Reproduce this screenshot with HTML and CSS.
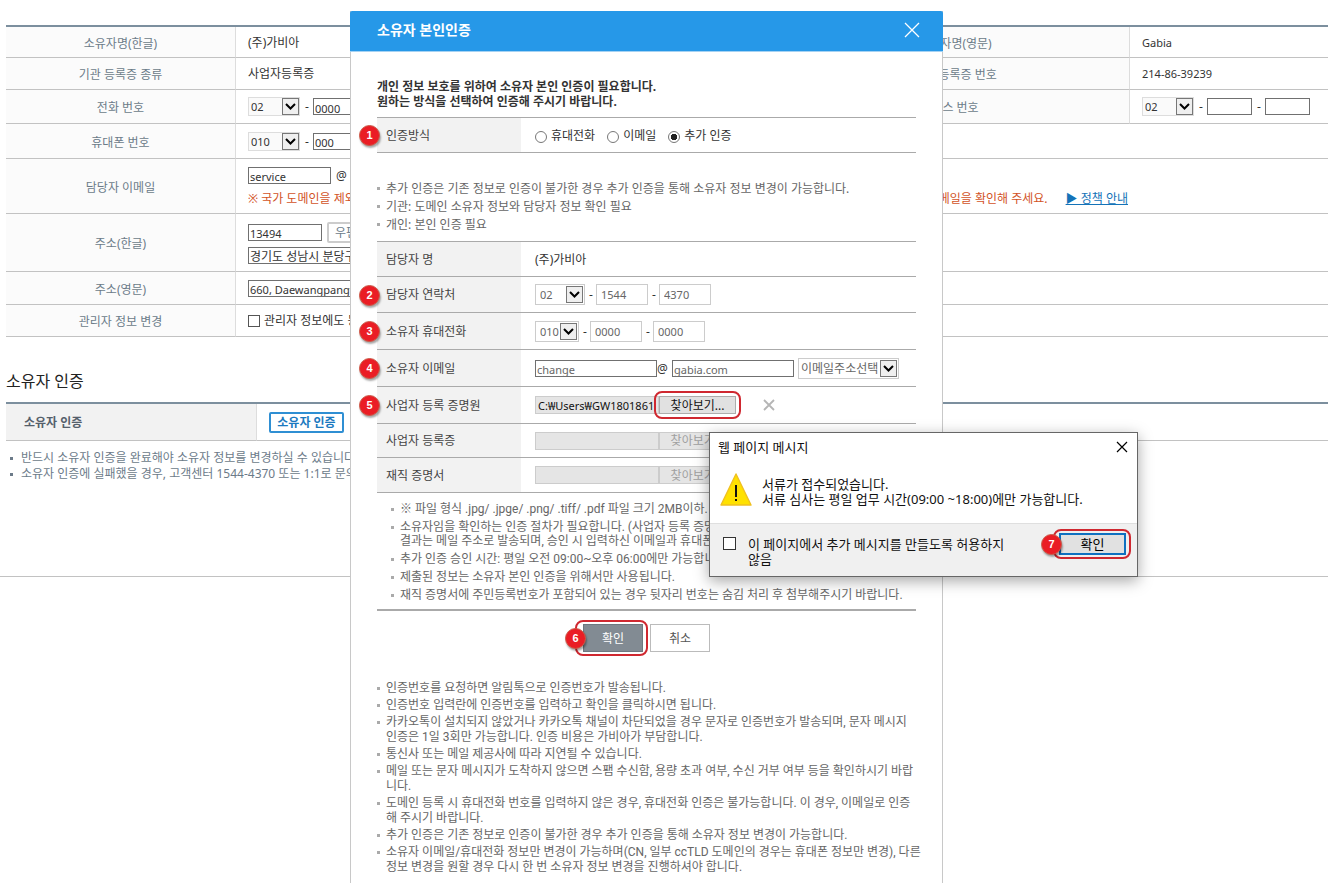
FILE: index.html
```html
<!DOCTYPE html>
<html lang="ko">
<head>
  <meta charset="UTF-8">
  <title>소유자 정보 변경</title>
  <link rel="stylesheet" href="styles.css">
</head>
<body>

  <!-- 소유자 정보 -->
  <div class="page">
    <table class="info">
      <colgroup>
        <col class="col-label">
        <col>
        <col class="col-label2">
        <col class="col-last">
      </colgroup>
      <tr class="h31">
        <th>소유자명(한글)</th>
        <td>(주)가비아</td>
        <th>소유자명(영문)</th>
        <td class="latin">Gabia</td>
      </tr>
      <tr class="h32">
        <th>기관 등록증 종류</th>
        <td>사업자등록증</td>
        <th>기관 등록증 번호</th>
        <td class="latin">214-86-39239</td>
      </tr>
      <tr class="h34">
        <th>전화 번호</th>
        <td>
          <div class="line">
            <select class="sel" aria-label="지역 번호"><option>02</option></select>
            <span class="dash">-</span>
            <input class="inp w45" type="text" value="0000" aria-label="전화 번호 앞자리">
          </div>
        </td>
        <th>팩스 번호</th>
        <td>
          <div class="line">
            <select class="sel" aria-label="팩스 지역 번호"><option>02</option></select>
            <span class="dash">-</span>
            <input class="inp w45" type="text" aria-label="팩스 번호 앞자리">
            <span class="dash">-</span>
            <input class="inp w45" type="text" aria-label="팩스 번호 뒷자리">
          </div>
        </td>
      </tr>
      <tr class="h35">
        <th>휴대폰 번호</th>
        <td colspan="3">
          <div class="line">
            <select class="sel" aria-label="휴대폰 국번"><option>010</option></select>
            <span class="dash">-</span>
            <input class="inp w45" type="text" value="000" aria-label="휴대폰 번호 앞자리">
          </div>
        </td>
      </tr>
      <tr class="h55">
        <th>담당자 이메일</th>
        <td colspan="3">
          <div class="line">
            <input class="inp w83" type="text" value="service" aria-label="이메일 아이디">
            <span>@</span>
          </div>
          <div class="notice">
            <span>※ 국가 도메인을 제외</span>
            <span>메일을 확인해 주세요. <a href="#">▶ 정책 안내</a></span>
          </div>
        </td>
      </tr>
      <tr class="h58">
        <th>주소(한글)</th>
        <td colspan="3">
          <div class="line">
            <input class="inp w74" type="text" value="13494" aria-label="우편번호">
            <button class="zip-btn" type="button">우편번호</button>
          </div>
          <div class="line addr">
            <input class="inp ko w240" type="text" value="경기도 성남시 분당구" aria-label="한글 주소">
          </div>
        </td>
      </tr>
      <tr class="h33">
        <th>주소(영문)</th>
        <td colspan="3">
          <div class="line">
            <input class="inp w240" type="text" value="660, Daewangpangyo" aria-label="영문 주소">
          </div>
        </td>
      </tr>
      <tr class="h32">
        <th>관리자 정보 변경</th>
        <td colspan="3">
          <label class="check"><input type="checkbox">관리자 정보에도 동</label>
        </td>
      </tr>
    </table>

    <h2>소유자 인증</h2>
    <table class="info auth">
      <colgroup><col class="col-auth"><col></colgroup>
      <tr>
        <th>소유자 인증</th>
        <td><button class="auth-btn" type="button">소유자 인증</button></td>
      </tr>
    </table>
    <ul class="page-list">
      <li>반드시 소유자 인증을 완료해야 소유자 정보를 변경하실 수 있습니다.</li>
      <li>소유자 인증에 실패했을 경우, 고객센터 1544-4370 또는 1:1로 문의</li>
    </ul>
  </div>
  <hr class="page-end">

  <!-- 본인인증 레이어 -->
  <div class="modal">
    <div class="modal-head">
      <h1>소유자 본인인증</h1>
      <button class="close" type="button" aria-label="닫기">
        <svg width="16" height="16" viewBox="0 0 16 16"><path d="M1 1L15 15M15 1L1 15" stroke="#fff" stroke-width="1.3" fill="none"/></svg>
      </button>
    </div>
    <div class="modal-body">
      <p class="intro">개인 정보 보호를 위하여 소유자 본인 인증이 필요합니다.<br>원하는 방식을 선택하여 인증해 주시기 바랍니다.</p>

      <table class="form">
        <tr class="h35">
          <th><span class="badge">1</span>인증방식</th>
          <td>
            <div class="radios">
              <label><input type="radio" name="method">휴대전화</label>
              <label><input type="radio" name="method">이메일</label>
              <label><input type="radio" name="method" checked>추가 인증</label>
            </div>
          </td>
        </tr>
      </table>

      <ul class="dots dots-top">
        <li>추가 인증은 기존 정보로 인증이 불가한 경우 추가 인증을 통해 소유자 정보 변경이 가능합니다.</li>
        <li>기관: 도메인 소유자 정보와 담당자 정보 확인 필요</li>
        <li>개인: 본인 인증 필요</li>
      </ul>

      <table class="form">
        <tr class="h35">
          <th>담당자 명</th>
          <td>(주)가비아</td>
        </tr>
        <tr class="h36">
          <th><span class="badge">2</span>담당자 연락처</th>
          <td>
            <div class="line">
              <select class="sel box w50" aria-label="연락처 국번"><option>02</option></select>
              <span class="dash">-</span>
              <input class="inp box" type="text" value="1544" aria-label="연락처 앞자리">
              <span class="dash">-</span>
              <input class="inp box" type="text" value="4370" aria-label="연락처 뒷자리">
            </div>
          </td>
        </tr>
        <tr class="h37">
          <th><span class="badge">3</span>소유자 휴대전화</th>
          <td>
            <div class="line">
              <select class="sel box w44" aria-label="휴대전화 국번"><option>010</option></select>
              <span class="dash">-</span>
              <input class="inp box" type="text" value="0000" aria-label="휴대전화 앞자리">
              <span class="dash">-</span>
              <input class="inp box" type="text" value="0000" aria-label="휴대전화 뒷자리">
            </div>
          </td>
        </tr>
        <tr class="h37">
          <th><span class="badge">4</span>소유자 이메일</th>
          <td>
            <div class="line">
              <div class="mail">
                <input class="inp w122" type="text" value="change" aria-label="소유자 이메일 아이디">
                <span class="at">@</span>
              </div>
              <input class="inp w122 gray" type="text" value="gabia.com" aria-label="소유자 이메일 도메인">
              <select class="sel box w101" aria-label="이메일 주소 선택"><option>이메일주소선택</option></select>
            </div>
          </td>
        </tr>
        <tr class="h37">
          <th><span class="badge">5</span>사업자 등록 증명원</th>
          <td>
            <div class="file">
              <input type="text" readonly value="C:₩Users₩GW1801861₩" aria-label="사업자 등록 증명원 파일">
              <span class="ring"><button type="button">찾아보기...</button></span>
              <button class="remove" type="button" aria-label="삭제">
                <svg width="12" height="12" viewBox="0 0 12 12"><path d="M1 1L11 11M11 1L1 11" stroke="#b5b5b5" stroke-width="1.8" fill="none"/></svg>
              </button>
            </div>
          </td>
        </tr>
        <tr class="h34">
          <th>사업자 등록증</th>
          <td>
            <div class="file">
              <input type="text" disabled aria-label="사업자 등록증 파일">
              <button type="button" disabled>찾아보기...</button>
            </div>
          </td>
        </tr>
        <tr class="h35">
          <th>재직 증명서</th>
          <td>
            <div class="file">
              <input type="text" disabled aria-label="재직 증명서 파일">
              <button type="button" disabled>찾아보기...</button>
            </div>
          </td>
        </tr>
      </table>

      <ul class="dots dots-file">
        <li>※ 파일 형식 .jpg/ .jpge/ .png/ .tiff/ .pdf 파일 크기 2MB이하.</li>
        <li>소유자임을 확인하는 인증 절차가 필요합니다. (사업자 등록 증명<br>결과는 메일 주소로 발송되며, 승인 시 입력하신 이메일과 휴대폰</li>
        <li>추가 인증 승인 시간: 평일 오전 09:00~오후 06:00에만 가능합니다.</li>
        <li>제출된 정보는 소유자 본인 인증을 위해서만 사용됩니다.</li>
        <li>재직 증명서에 주민등록번호가 포함되어 있는 경우 뒷자리 번호는 숨김 처리 후 첨부해주시기 바랍니다.</li>
      </ul>

      <div class="actions">
        <span class="ring"><span class="badge">6</span><button class="ok" type="button">확인</button></span>
        <button class="cancel" type="button">취소</button>
      </div>

      <ul class="dots dots-help">
        <li>인증번호를 요청하면 알림톡으로 인증번호가 발송됩니다.</li>
        <li>인증번호 입력란에 인증번호를 입력하고 확인을 클릭하시면 됩니다.</li>
        <li>카카오톡이 설치되지 않았거나 카카오톡 채널이 차단되었을 경우 문자로 인증번호가 발송되며, 문자 메시지<br>인증은 1일 3회만 가능합니다. 인증 비용은 가비아가 부담합니다.</li>
        <li>통신사 또는 메일 제공사에 따라 지연될 수 있습니다.</li>
        <li>메일 또는 문자 메시지가 도착하지 않으면 스팸 수신함, 용량 초과 여부, 수신 거부 여부 등을 확인하시기 바랍<br>니다.</li>
        <li>도메인 등록 시 휴대전화 번호를 입력하지 않은 경우, 휴대전화 인증은 불가능합니다. 이 경우, 이메일로 인증<br>해 주시기 바랍니다.</li>
        <li>추가 인증은 기존 정보로 인증이 불가한 경우 추가 인증을 통해 소유자 정보 변경이 가능합니다.</li>
        <li>소유자 이메일/휴대전화 정보만 변경이 가능하며(CN, 일부 ccTLD 도메인의 경우는 휴대폰 정보만 변경), 다른<br>정보 변경을 원할 경우 다시 한 번 소유자 정보 변경을 진행하셔야 합니다.</li>
      </ul>
    </div>
  </div>

  <!-- 웹 페이지 메시지 -->
  <div class="dialog" role="dialog" aria-labelledby="dialogTitle">
    <div class="dialog-head">
      <span id="dialogTitle">웹 페이지 메시지</span>
      <button class="close" type="button" aria-label="닫기">
        <svg width="12" height="12" viewBox="0 0 12 12"><path d="M1 1L11 11M11 1L1 11" stroke="#000" stroke-width="1.2" fill="none"/></svg>
      </button>
    </div>
    <div class="dialog-body">
      <svg width="32" height="33" viewBox="0 0 32 33">
        <path d="M16 1L31 32H1Z" fill="#ffe100" stroke="#f0c020" stroke-width="1.4" stroke-linejoin="round"/>
        <path d="M15 12h2v12h-2zM15 26h2v2h-2z" fill="#111"/>
      </svg>
      <p>서류가 접수되었습니다.<br>서류 심사는 평일 업무 시간(09:00 ~18:00)에만 가능합니다.</p>
    </div>
    <div class="dialog-foot">
      <label><input type="checkbox"><span>이 페이지에서 추가 메시지를 만들도록 허용하지<br>않음</span></label>
      <span class="ring"><span class="badge">7</span><button type="button">확인</button></span>
    </div>
  </div>

</body>
</html>
```
FILE: styles.css
```css
* {
  box-sizing: border-box;
}

body {
  margin: 0;
  position: relative;
  min-height: 100vh;
  overflow: hidden;
  background: #fff;
  color: #333;
  font-family: "Noto Sans", "Noto Sans CJK KR", sans-serif;
  font-size: 12px;
  line-height: 15px;
}

h1, h2, p, ul {
  margin: 0;
  padding: 0;
}

button, input, select {
  margin: 0;
  font-family: inherit;
  font-size: 12px;
}

button {
  padding: 0;
  cursor: pointer;
}

table {
  width: 100%;
  border-collapse: separate;
  border-spacing: 0;
  table-layout: fixed;
}

.h31 { height: 31px; }
.h32 { height: 32px; }
.h33 { height: 33px; }
.h34 { height: 34px; }
.h35 { height: 35px; }
.h36 { height: 36px; }
.h37 { height: 37px; }
.h55 { height: 55px; }
.h58 { height: 58px; }

.w44 { width: 44px; }
.w45 { width: 45px; }
.w50 { width: 50px; }
.w74 { width: 74px; }
.w83 { width: 83px; }
.w101 { width: 101px; }
.w122 { width: 122px; }
.w240 { width: 240px; }

/* page */
.page {
  padding: 25px 0 0 6px;
}

.info {
  border-top: 2px solid #7c8f9e;
}

.col-label { width: 230px; }
.col-label2 { width: 349px; }
.col-last { width: 198px; }
.col-auth { width: 251px; }

.info th, .info td {
  padding: 0;
  border-bottom: 1px solid #c2c2c2;
}

.info th {
  padding-top: 2px;
  background: #fbfbfb;
  border-right: 1px solid #ddd;
  color: #6c7b89;
  font-weight: normal;
}

.info td {
  padding-left: 12px;
}

.info .latin {
  font-size: 11px;
}

.line {
  display: flex;
  align-items: center;
  gap: 5px;
}

.form .line {
  gap: 4px;
}

.dash {
  width: 3px;
  text-align: center;
}

.sel {
  appearance: none;
  width: 52px;
  height: 19px;
  padding: 0 18px 0 2px;
  border: 1px solid #ddd;
  border-radius: 0;
  background: #fafafa url("data:image/svg+xml,%3Csvg xmlns='http://www.w3.org/2000/svg' width='17' height='17'%3E%3Crect x='.5' y='.5' width='16' height='16' fill='%23efefef' stroke='%23777'/%3E%3Cpath d='M4 6l4.500 4.500L13 6' fill='none' stroke='%23000' stroke-width='2'/%3E%3C/svg%3E") no-repeat right 0 center;
  color: #333;
  font-size: 11px;
}

.inp {
  height: 17px;
  padding: 3px 1px 0;
  border: 1px solid #707070;
  border-radius: 0;
  background: #fff;
  color: #333;
  font-size: 11px;
}

.inp.ko {
  padding-top: 1px;
  font-size: 12px;
}

.notice {
  display: flex;
  justify-content: space-between;
  margin-top: 7px;
  padding-right: 200px;
  color: #d2531f;
}

.notice a {
  margin-left: 15px;
  color: #1473b8;
}

.zip-btn {
  width: 60px;
  height: 21px;
  border: 2px solid #ccc;
  border-radius: 2px;
  background: #fff;
  color: #6c7b89;
  line-height: 15px;
}

.addr {
  margin-top: 4px;
}

.check {
  display: flex;
  align-items: center;
  gap: 4px;
}

input[type="checkbox"] {
  appearance: none;
  flex: none;
  width: 12px;
  height: 12px;
  border: 1px solid #555;
  background: #fff;
}

.page h2 {
  margin: 34px 0 11px;
  color: #222;
  font-size: 16px;
  font-weight: normal;
  line-height: 20px;
}

.auth tr {
  height: 37px;
}

.auth th {
  padding: 0 0 0 18px;
  background: #f2f2f2;
  color: #55606b;
  font-weight: bold;
  text-align: left;
}

.auth-btn {
  display: block;
  width: 75px;
  height: 21px;
  border: 2px solid #2f8fd3;
  border-radius: 2px;
  background: #fff;
  color: #1a79bf;
  font-weight: bold;
  line-height: 15px;
}

.page-list {
  margin-top: 9px;
  list-style: none;
  color: #6c7b89;
  line-height: 16px;
}

.page-list li {
  padding-left: 15px;
  background: linear-gradient(#6c7b89, #6c7b89) no-repeat 4px 7px / 3px 3px;
}

.page-end {
  margin: 94px 0 0;
  border: 0;
  border-top: 1px solid #c2c2c2;
}

/* modal */
.modal {
  position: absolute;
  top: 11px;
  left: 350px;
  width: 593px;
  min-height: calc(100vh - 11px);
  border: 1px solid #c8c8c8;
  border-width: 0 1px;
  background: #fff;
}

.modal-head {
  display: flex;
  justify-content: space-between;
  align-items: center;
  height: 41px;
  margin: 0 -1px;
  padding: 0 23px 2px 27px;
  border-bottom: 1px solid #a5d2f3;
  border-radius: 2px 2px 0 0;
  background: #2698e8;
}

.modal-head h1 {
  color: #fff;
  font-size: 14px;
  line-height: 20px;
}

.close, .remove {
  display: flex;
  border: 0;
  background: none;
}

.modal-body {
  padding: 27px 26px 0;
}

.intro {
  margin-bottom: 8px;
  font-weight: bold;
}

.form {
  border-top: 1px solid #aaa;
}

.form th, .form td {
  padding: 0;
  border-bottom: 1px solid #aaa;
}

.form th {
  position: relative;
  width: 144px;
  padding-left: 9px;
  background: #f2f2f2;
  color: #444;
  font-weight: normal;
  text-align: left;
}

.form td {
  padding-left: 14px;
}

.badge {
  position: absolute;
  top: calc(50% - 10px);
  left: -18px;
  z-index: 1;
  width: 21px;
  height: 21px;
  border: 1px solid #cc5a48;
  border-radius: 50%;
  background: #ea1d25;
  box-shadow: 1px 2px 2px rgba(0, 0, 0, 0.35);
  color: #fff;
  font-family: "Liberation Sans", sans-serif;
  font-size: 11px;
  font-weight: bold;
  line-height: 19px;
  text-align: center;
}

.radios {
  display: flex;
  gap: 12px;
}

.radios label {
  display: flex;
  align-items: center;
  gap: 4px;
}

.radios input {
  appearance: none;
  width: 12px;
  height: 12px;
  margin-top: 3px;
  border: 1px solid #777;
  border-radius: 50%;
}

.radios input:checked {
  background: radial-gradient(circle, #222 3px, transparent 3px);
}

.sel.box {
  height: 21px;
  padding-left: 4px;
  border-color: #ccc;
  background-color: #fff;
  background-position: right 1px center;
  color: #666;
}

.sel.w50 { width: 50px; }
.sel.w44 { width: 44px; }

.sel.w101 {
  width: 101px;
  padding-left: 2px;
  font-size: 12px;
}

.inp.box {
  width: 52px;
  height: 21px;
  padding: 0 4px;
  border-color: #ccc;
  color: #666;
}

.mail {
  display: flex;
  align-items: center;
}

.mail .inp, .inp.gray {
  color: #666;
}

.mail .at {
  width: 11px;
}

.file {
  display: flex;
  align-items: center;
}

.file input {
  width: 124px;
  height: 18px;
  padding: 0 2px;
  border: 1px solid #ccc;
  background: #e5e5e5;
  color: #111;
  font-size: 11px;
}

.file button {
  display: block;
  width: 77px;
  height: 18px;
  border: 1px solid #adadad;
  background: #e1e1e1;
  color: #111;
  line-height: 15px;
}

.file button:disabled {
  border-color: #ccc;
  background: #e5e5e5;
  color: #a0a0a0;
}

.file .remove {
  justify-content: center;
  width: 12px;
  height: 12px;
  margin-left: 27px;
  border: 0;
  background: none;
}

.ring {
  position: relative;
}

.ring::after {
  content: "";
  position: absolute;
  inset: -5px;
  border: 2px solid #cf2830;
  border-radius: 8px;
  pointer-events: none;
}

.dots {
  list-style: none;
  color: #666;
  white-space: nowrap;
}

.dots li {
  margin-bottom: 2px;
  padding-left: 9px;
  background: linear-gradient(#aaa, #aaa) no-repeat 0 6px / 3px 3px;
}

.dots-top {
  margin: 28px 0 9px;
}

.dots-top li {
  margin-bottom: 3px;
}

.dots-file, .dots-help {
  font-family: Roboto, "Noto Sans CJK KR", sans-serif;
}

.dots-file {
  padding: 9px 0 3px 14px;
  border-bottom: 2px solid #aaa;
  line-height: 14px;
}

.dots-file li {
  margin-bottom: 4px;
}

.actions {
  display: flex;
  justify-content: center;
  gap: 7px;
  margin: 13px 0 29px;
}

.actions button {
  display: block;
  width: 60px;
  height: 28px;
  border: 1px solid #bbb;
  background: #fff;
  color: #555;
}

.actions .ok {
  border-color: #6e7880;
  background: #828b93;
  color: #fff;
}

.actions .ring::after {
  inset: -4px -5px -4px -8px;
}

/* message dialog */
.dialog {
  position: absolute;
  top: 432px;
  left: 709px;
  z-index: 2;
  width: 429px;
  border: 1px solid #666;
  background: #fff;
  box-shadow: 0 4px 14px rgba(0, 0, 0, 0.35);
  color: #111;
  font-size: 13px;
}

.dialog-head {
  display: flex;
  justify-content: space-between;
  align-items: center;
  height: 28px;
  padding: 0 9px 0 8px;
}

.dialog-body {
  display: flex;
  gap: 10px;
  height: 62px;
  padding: 12px 10px 0;
}

.dialog-body p {
  padding-top: 4px;
}

.dialog-foot {
  display: flex;
  justify-content: space-between;
  align-items: flex-start;
  height: 53px;
  padding: 9px 11px 0 13px;
  border-top: 1px solid #dfdfdf;
  background: #f0f0f0;
}

.dialog-foot label {
  display: flex;
  gap: 12px;
  padding-top: 4px;
}

.dialog-foot input[type="checkbox"] {
  width: 13px;
  height: 13px;
  border-color: #333;
}

.dialog-foot button {
  display: block;
  width: 67px;
  height: 22px;
  border: 2px solid #0f70c0;
  background: #e1e1e1;
  font-size: 13px;
  line-height: 16px;
}

.dialog-foot .ring::after {
  inset: -4px -5px -4px -6px;
}
```
